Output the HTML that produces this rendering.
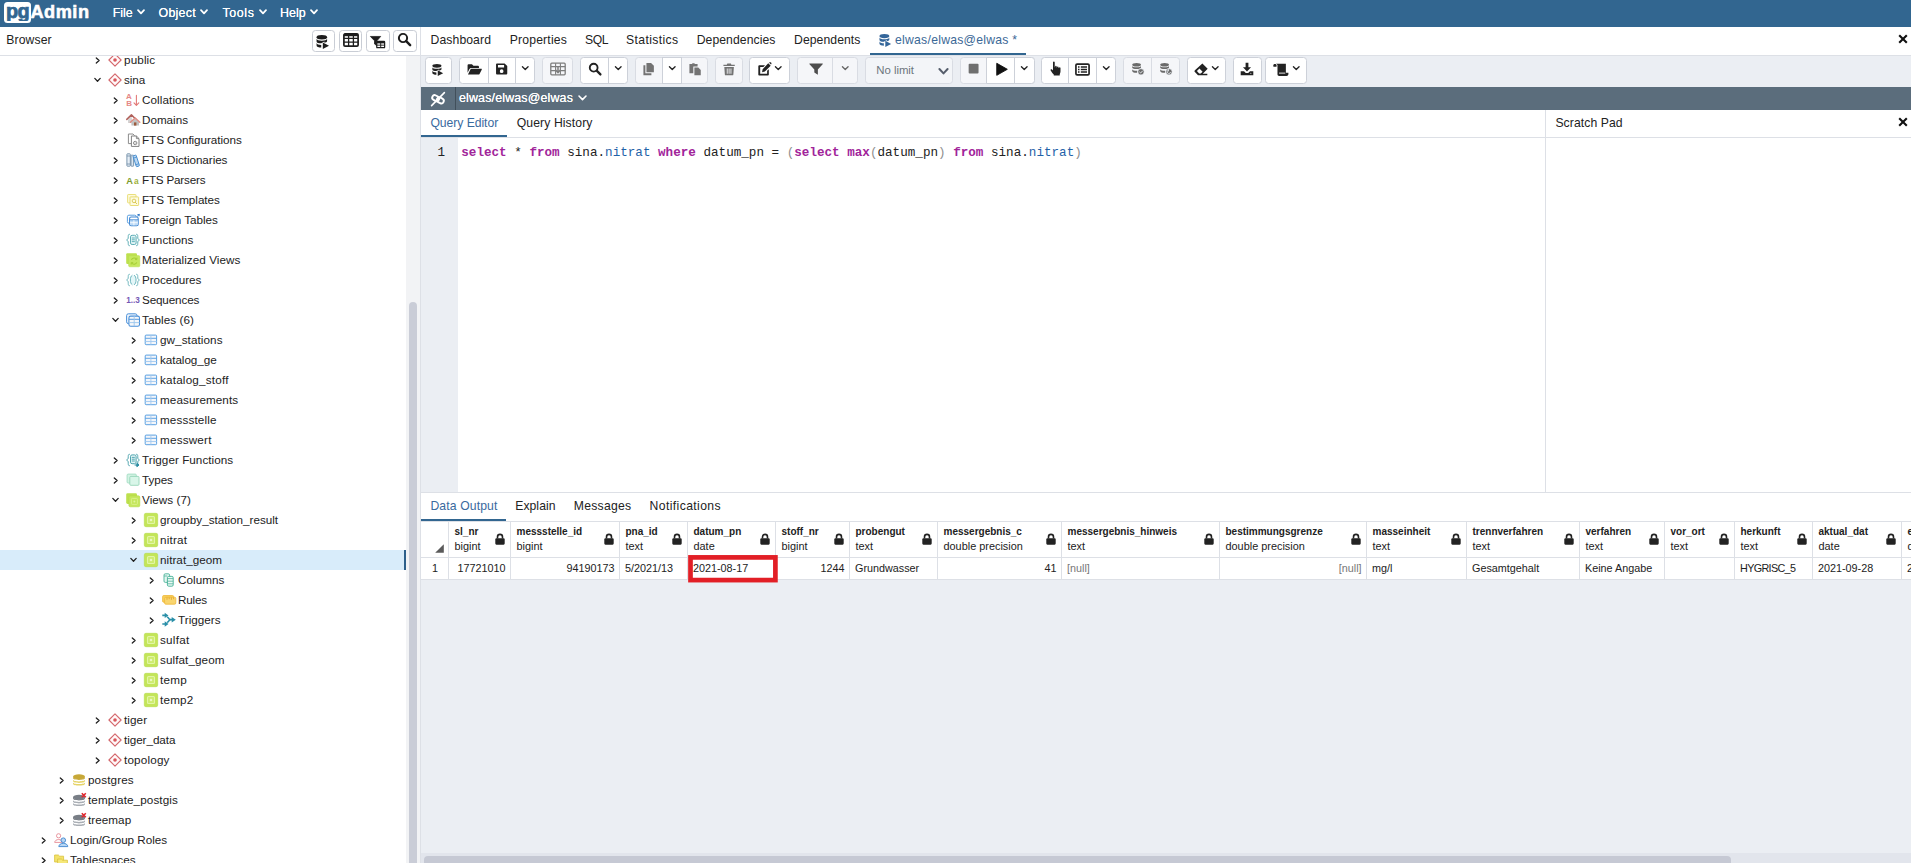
<!DOCTYPE html>
<html lang="en"><head><meta charset="utf-8"><title>pgAdmin 4</title>
<style>
html,body{margin:0;padding:0;}
body{width:1911px;height:863px;overflow:hidden;position:relative;background:#fff;font-family:'Liberation Sans', Arial, sans-serif;}
div,span.t,svg{position:absolute;box-sizing:border-box;}
span.t{white-space:pre;}
svg{overflow:visible;}
</style></head><body>
<div style="left:0px;top:0px;width:1911px;height:27px;background:#326690;"></div>
<div style="left:4px;top:2px;width:27px;height:21px;background:#fff;border-radius:3.5px;"></div>
<div style="left:4px;top:2px;width:27px;height:18.6px;overflow:hidden;">
<span class="t" id="t1" style="top:-1.150px;font-size:20.5px;line-height:20.5px;color:#326690;font-weight:700;left:2.20px;-webkit-text-stroke:0.75px #326690;transform:scaleX(0.97);transform-origin:0 0;letter-spacing:-0.6px;">pg</span>
</div>
<span class="t" id="t2" style="top:3.100px;font-size:18.2px;line-height:18.2px;color:#fff;font-weight:700;letter-spacing:0.521px;left:30.40px;-webkit-text-stroke:0.55px #fff;">Admin</span>
<span class="t" id="t3" style="top:7.000px;font-size:12.4px;line-height:12.4px;color:#fff;letter-spacing:-0.042px;left:112.70px;text-shadow:0 0 0.4px #fff;">File</span>
<svg style="left:137px;top:7.6px;" width="8" height="8" viewBox="0 0 8 8"><path d="M1 2.2 L4 5.3 L7 2.2" fill="none" stroke="#fff" stroke-width="1.8" stroke-linecap="round" stroke-linejoin="round"/></svg>
<span class="t" id="t4" style="top:7.000px;font-size:12.4px;line-height:12.4px;color:#fff;letter-spacing:0.281px;left:158.50px;text-shadow:0 0 0.4px #fff;">Object</span>
<svg style="left:200.4px;top:7.6px;" width="8" height="8" viewBox="0 0 8 8"><path d="M1 2.2 L4 5.3 L7 2.2" fill="none" stroke="#fff" stroke-width="1.8" stroke-linecap="round" stroke-linejoin="round"/></svg>
<span class="t" id="t5" style="top:7.000px;font-size:12.4px;line-height:12.4px;color:#fff;letter-spacing:0.632px;left:222.40px;text-shadow:0 0 0.4px #fff;">Tools</span>
<svg style="left:259px;top:7.6px;" width="8" height="8" viewBox="0 0 8 8"><path d="M1 2.2 L4 5.3 L7 2.2" fill="none" stroke="#fff" stroke-width="1.8" stroke-linecap="round" stroke-linejoin="round"/></svg>
<span class="t" id="t6" style="top:7.000px;font-size:12.4px;line-height:12.4px;color:#fff;letter-spacing:0.029px;left:280.00px;text-shadow:0 0 0.4px #fff;">Help</span>
<svg style="left:310.2px;top:7.6px;" width="8" height="8" viewBox="0 0 8 8"><path d="M1 2.2 L4 5.3 L7 2.2" fill="none" stroke="#fff" stroke-width="1.8" stroke-linecap="round" stroke-linejoin="round"/></svg>
<div style="left:0px;top:27px;width:420px;height:28px;background:#fff;"></div>
<div style="left:0px;top:55px;width:420px;height:1px;background:#dde0e6;"></div>
<span class="t" id="t7" style="top:34.100px;font-size:12.2px;line-height:12.2px;color:#222;letter-spacing:0.114px;left:6.30px;">Browser</span>
<div style="left:312px;top:30px;width:23px;height:22px;background:#fff;border:1px solid #c9cdd5;border-radius:3.5px;"></div>
<svg style="left:315.4px;top:34.2px;" width="15.6" height="15.6" viewBox="0 0 16 16"><ellipse cx="7" cy="3.4" rx="5.4" ry="2.3" fill="#1c1c1c"/><path d="M1.6 5 C1.6 7.6 12.4 7.6 12.4 5 V7.4 C12.4 8.2 11 8.8 9.6 9 L9.6 7.6 L6.4 9.6 C4 9.6 1.6 9 1.6 7.6 Z" fill="#1c1c1c"/><path d="M1.6 9 C1.6 10.6 4 11.2 6.4 11.3 V13.9 C4 13.8 1.6 13.2 1.6 11.8 Z" fill="#1c1c1c"/><path d="M8 8.6 L14.4 12 L8 15.4 Z" fill="#1c1c1c"/></svg>
<div style="left:339px;top:30px;width:23px;height:22px;background:#fff;border:1px solid #c9cdd5;border-radius:3.5px;"></div>
<svg style="left:342.8px;top:31.6px;" width="16" height="16" viewBox="0 0 16 16"><rect x="0.9" y="1.9" width="14.2" height="12.2" rx="1.2" fill="none" stroke="#1c1c1c" stroke-width="1.7"/><path d="M0.9 3 H15.1" stroke="#1c1c1c" stroke-width="2.4"/><path d="M0.9 6.4 H15.1 M0.9 10.2 H15.1 M5.6 1.9 V14.1 M10.4 1.9 V14.1" stroke="#1c1c1c" stroke-width="1.3"/></svg>
<div style="left:366px;top:30px;width:23.5px;height:22px;background:#fff;border:1px solid #c9cdd5;border-radius:3.5px;"></div>
<svg style="left:370.1px;top:34.1px;" width="15" height="15" viewBox="0 0 16 16"><path d="M0.4 2.6 H11.4 L7.4 7.2 V12.6 L4.8 10.6 V7.2 Z" fill="#1c1c1c" stroke="#1c1c1c" stroke-width="0.8" stroke-linejoin="round"/><rect x="7.2" y="7.8" width="8.4" height="6.8" rx="0.6" fill="#fff" stroke="#1c1c1c" stroke-width="1.3"/><path d="M7.2 9.2 H15.6" stroke="#1c1c1c" stroke-width="1.6"/><path d="M7.2 11.9 H15.6 M11.4 7.8 V14.6" stroke="#1c1c1c" stroke-width="1"/></svg>
<div style="left:393px;top:30px;width:23.5px;height:22px;background:#fff;border:1px solid #c9cdd5;border-radius:3.5px;"></div>
<svg style="left:397.1px;top:32.3px;" width="15" height="15" viewBox="0 0 16 16"><circle cx="6.4" cy="6.4" r="4.4" fill="none" stroke="#1c1c1c" stroke-width="2.1"/><path d="M9.8 9.8 L14 14" stroke="#1c1c1c" stroke-width="2.6" stroke-linecap="round"/></svg>
<div style="left:0;top:56px;width:406px;height:807px;overflow:hidden;">
<svg style="left:93.5px;top:-0.5px;" width="8" height="9" viewBox="0 0 8 9"><path d="M2.3 1.9 L5.1 4.5 L2.3 7.1" fill="none" stroke="#222" stroke-width="1.3" stroke-linecap="round" stroke-linejoin="round"/></svg>
<svg style="left:108px;top:-3px;" width="14" height="14" viewBox="0 0 14 14"><path d="M7 0.9 L13.1 7 L7 13.1 L0.9 7 Z" fill="#fff8f8" stroke="#d4676c" stroke-width="1.1" stroke-linejoin="round"/><circle cx="7" cy="7" r="1.8" fill="#d9575c"/></svg>
<span class="t" id="t8" style="top:-2.150px;font-size:11.7px;line-height:11.7px;color:#222;letter-spacing:0.126px;left:124.00px;">public</span>
<svg style="left:93.0px;top:20px;" width="9" height="8" viewBox="0 0 9 8"><path d="M1.8 2.4 L4.5 5.2 L7.2 2.4" fill="none" stroke="#222" stroke-width="1.3" stroke-linecap="round" stroke-linejoin="round"/></svg>
<svg style="left:108px;top:17px;" width="14" height="14" viewBox="0 0 14 14"><path d="M7 0.9 L13.1 7 L7 13.1 L0.9 7 Z" fill="#fff8f8" stroke="#d4676c" stroke-width="1.1" stroke-linejoin="round"/><circle cx="7" cy="7" r="1.8" fill="#d9575c"/></svg>
<span class="t" id="t9" style="top:17.850px;font-size:11.7px;line-height:11.7px;color:#222;letter-spacing:-0.063px;left:124.00px;">sina</span>
<svg style="left:111.5px;top:39.5px;" width="8" height="9" viewBox="0 0 8 9"><path d="M2.3 1.9 L5.1 4.5 L2.3 7.1" fill="none" stroke="#222" stroke-width="1.3" stroke-linecap="round" stroke-linejoin="round"/></svg>
<svg style="left:126px;top:37px;" width="14" height="14" viewBox="0 0 14 14"><text x="0.1" y="5.6" font-size="8" font-weight="700" fill="#e58886" font-family="Liberation Sans, sans-serif">A</text><text x="0.3" y="13.4" font-size="8" font-weight="700" fill="#e58886" font-family="Liberation Sans, sans-serif">B</text><path d="M10.4 2.4 V12 M8 9.8 L10.4 12.4 L12.8 9.8" fill="none" stroke="#e37a78" stroke-width="1.1" stroke-linecap="round" stroke-linejoin="round"/></svg>
<span class="t" id="t10" style="top:37.850px;font-size:11.7px;line-height:11.7px;color:#222;letter-spacing:0.087px;left:142.00px;">Collations</span>
<svg style="left:111.5px;top:59.5px;" width="8" height="9" viewBox="0 0 8 9"><path d="M2.3 1.9 L5.1 4.5 L2.3 7.1" fill="none" stroke="#222" stroke-width="1.3" stroke-linecap="round" stroke-linejoin="round"/></svg>
<svg style="left:126px;top:57px;" width="14" height="14" viewBox="0 0 14 14"><path d="M2 6.4 V10 H6 V6.4 L5.4 3 Z" fill="#d4d4d4"/><path d="M0.8 6.4 L5.4 1.9 L9.6 6" fill="none" stroke="#b0615b" stroke-width="1.5" stroke-linejoin="round" stroke-linecap="round"/><path d="M5.4 9 L9.2 5.6 L13 9 V12.6 H5.4 Z" fill="#c2c2c2"/><path d="M4.4 9.2 L9.2 4.9 L13.8 9.2" fill="none" stroke="#e08c82" stroke-width="1.4" stroke-linejoin="round" stroke-linecap="round"/><rect x="8" y="9.4" width="2.4" height="3.2" fill="#9c5a3c"/></svg>
<span class="t" id="t11" style="top:57.850px;font-size:11.7px;line-height:11.7px;color:#222;letter-spacing:-0.018px;left:142.00px;">Domains</span>
<svg style="left:111.5px;top:79.5px;" width="8" height="9" viewBox="0 0 8 9"><path d="M2.3 1.9 L5.1 4.5 L2.3 7.1" fill="none" stroke="#222" stroke-width="1.3" stroke-linecap="round" stroke-linejoin="round"/></svg>
<svg style="left:126px;top:77px;" width="14" height="14" viewBox="0 0 14 14"><path d="M2.4 1 H7 L8.6 2.6 V10.6 H2.4 Z" fill="#fff" stroke="#8c8c8c" stroke-width="1" stroke-linejoin="round"/><path d="M5.4 3 H10.4 L13 5.6 V13.4 H5.4 Z" fill="#fff" stroke="#808080" stroke-width="1" stroke-linejoin="round"/><path d="M10.4 3 V5.6 H13" fill="none" stroke="#808080" stroke-width="0.9"/><circle cx="9.2" cy="10" r="1.7" fill="none" stroke="#8a8a8a" stroke-width="1"/><circle cx="9.2" cy="10" r="0.55" fill="#8a8a8a"/></svg>
<span class="t" id="t12" style="top:77.850px;font-size:11.7px;line-height:11.7px;color:#222;letter-spacing:-0.055px;left:142.00px;">FTS Configurations</span>
<svg style="left:111.5px;top:99.5px;" width="8" height="9" viewBox="0 0 8 9"><path d="M2.3 1.9 L5.1 4.5 L2.3 7.1" fill="none" stroke="#222" stroke-width="1.3" stroke-linecap="round" stroke-linejoin="round"/></svg>
<svg style="left:126px;top:97px;" width="14" height="14" viewBox="0 0 14 14"><rect x="0.9" y="0.8" width="3.4" height="12.4" rx="0.6" fill="#e6eef6" stroke="#6f8ca6" stroke-width="0.9"/><path d="M0.9 3 H4.3 M0.9 11 H4.3" stroke="#6f8ca6" stroke-width="0.8"/><rect x="5" y="2.2" width="2.6" height="11" rx="0.5" fill="#dce7f2" stroke="#6f8ca6" stroke-width="0.9"/><g transform="rotate(-18 10.2 8)"><rect x="8.6" y="2.2" width="3.3" height="11.4" rx="0.6" fill="#b9d7f2" stroke="#4b8fd0" stroke-width="0.9"/><path d="M8.6 4.4 H11.9 M8.6 11.4 H11.9" stroke="#4b8fd0" stroke-width="0.8"/></g></svg>
<span class="t" id="t13" style="top:97.850px;font-size:11.7px;line-height:11.7px;color:#222;letter-spacing:-0.062px;left:142.00px;">FTS Dictionaries</span>
<svg style="left:111.5px;top:119.5px;" width="8" height="9" viewBox="0 0 8 9"><path d="M2.3 1.9 L5.1 4.5 L2.3 7.1" fill="none" stroke="#222" stroke-width="1.3" stroke-linecap="round" stroke-linejoin="round"/></svg>
<svg style="left:126px;top:117px;" width="14" height="14" viewBox="0 0 14 14"><text x="0.2" y="10.8" font-size="9.2" font-weight="700" fill="#7c9a2c" font-family="Liberation Sans, sans-serif">A</text><text x="8" y="10.8" font-size="8.4" font-weight="700" fill="#9db23a" font-family="Liberation Sans, sans-serif">a</text></svg>
<span class="t" id="t14" style="top:117.850px;font-size:11.7px;line-height:11.7px;color:#222;letter-spacing:-0.209px;left:142.00px;">FTS Parsers</span>
<svg style="left:111.5px;top:139.5px;" width="8" height="9" viewBox="0 0 8 9"><path d="M2.3 1.9 L5.1 4.5 L2.3 7.1" fill="none" stroke="#222" stroke-width="1.3" stroke-linecap="round" stroke-linejoin="round"/></svg>
<svg style="left:126px;top:137px;" width="14" height="14" viewBox="0 0 14 14"><rect x="1.6" y="1.5" width="8.4" height="8.4" rx="0.6" fill="#fdfadb" stroke="#e8db70" stroke-width="0.9"/><rect x="4" y="3.9" width="8.6" height="8.6" rx="0.6" fill="#fdfbe0" stroke="#e5d766" stroke-width="0.9"/><circle cx="8" cy="7.9" r="1.8" fill="none" stroke="#d9c650" stroke-width="0.9"/><path d="M9.3 9.3 L10.7 10.7" stroke="#d9c650" stroke-width="1" stroke-linecap="round"/></svg>
<span class="t" id="t15" style="top:137.850px;font-size:11.7px;line-height:11.7px;color:#222;letter-spacing:-0.045px;left:142.00px;">FTS Templates</span>
<svg style="left:111.5px;top:159.5px;" width="8" height="9" viewBox="0 0 8 9"><path d="M2.3 1.9 L5.1 4.5 L2.3 7.1" fill="none" stroke="#222" stroke-width="1.3" stroke-linecap="round" stroke-linejoin="round"/></svg>
<svg style="left:126px;top:157px;" width="14" height="14" viewBox="0 0 14 14"><rect x="1.4" y="2.2" width="8.8" height="8" rx="1.5" fill="#fff" stroke="#5a9fe0" stroke-width="1"/><rect x="3.6" y="4" width="8.6" height="8.8" rx="1.5" fill="#fff" stroke="#3f86d2" stroke-width="1.05"/><path d="M4.1 7.1 H11.7 V11.3 C11.7 11.9 11.3 12.3 10.7 12.3 H5.1 C4.5 12.3 4.1 11.9 4.1 11.3 Z" fill="#bcdaf6"/><path d="M3.6 6.8 H12.2" stroke="#3f86d2" stroke-width="0.9"/><path d="M4.1 9.7 H11.7 M7.9 7.1 V12.3" stroke="#fff" stroke-width="0.8"/><path d="M11.6 3 L13 1.7 M13.1 1.6 V2.9 M13.1 1.6 H11.8" stroke="#2f78c8" stroke-width="1" fill="none" stroke-linecap="round"/></svg>
<span class="t" id="t16" style="top:157.850px;font-size:11.7px;line-height:11.7px;color:#222;letter-spacing:-0.047px;left:142.00px;">Foreign Tables</span>
<svg style="left:111.5px;top:179.5px;" width="8" height="9" viewBox="0 0 8 9"><path d="M2.3 1.9 L5.1 4.5 L2.3 7.1" fill="none" stroke="#222" stroke-width="1.3" stroke-linecap="round" stroke-linejoin="round"/></svg>
<svg style="left:126px;top:177px;" width="14" height="14" viewBox="0 0 14 14"><path d="M3.4 1.2 C1.9 1.2 2.3 3.2 2.2 5 C2.1 6.4 1 6.6 0.6 7 C1 7.4 2.1 7.6 2.2 9 C2.3 10.8 1.9 12.8 3.4 12.8" fill="none" stroke="#56aab2" stroke-width="0.95" stroke-linecap="round"/><path d="M10.6 1.2 C12.1 1.2 11.7 3.2 11.8 5 C11.9 6.4 13 6.6 13.4 7 C13 7.4 11.9 7.6 11.8 9 C11.7 10.8 12.1 12.8 10.6 12.8" fill="none" stroke="#56aab2" stroke-width="0.95" stroke-linecap="round"/><rect x="4.5" y="2.3" width="5.6" height="9.2" rx="1.6" fill="#e1f4f6" stroke="#56aab2" stroke-width="0.95"/><path d="M5.8 5 H8.8 M5.8 6.8 H8.8 M5.8 8.6 H8.8" stroke="#56aab2" stroke-width="0.9"/></svg>
<span class="t" id="t17" style="top:177.850px;font-size:11.7px;line-height:11.7px;color:#222;letter-spacing:0.092px;left:142.00px;">Functions</span>
<svg style="left:111.5px;top:199.5px;" width="8" height="9" viewBox="0 0 8 9"><path d="M2.3 1.9 L5.1 4.5 L2.3 7.1" fill="none" stroke="#222" stroke-width="1.3" stroke-linecap="round" stroke-linejoin="round"/></svg>
<svg style="left:126px;top:197px;" width="14" height="14" viewBox="0 0 14 14"><rect x="0.2" y="0.2" width="10.8" height="10.8" rx="1.2" fill="#bde04e"/><rect x="2.6" y="2.6" width="11.2" height="11.2" rx="1.2" fill="#c6e85f" stroke="#b7dc4a" stroke-width="0.5"/><path d="M10.6 6.2 A3 3 0 0 0 5.4 6.8 M5.6 10 A3 3 0 0 0 10.8 9.4" fill="none" stroke="#a5cd36" stroke-width="1.1"/><path d="M10.9 4.6 V6.6 H9 M5.2 11.6 V9.6 H7.2" fill="none" stroke="#a5cd36" stroke-width="0.9"/></svg>
<span class="t" id="t18" style="top:197.850px;font-size:11.7px;line-height:11.7px;color:#222;letter-spacing:0.070px;left:142.00px;">Materialized Views</span>
<svg style="left:111.5px;top:219.5px;" width="8" height="9" viewBox="0 0 8 9"><path d="M2.3 1.9 L5.1 4.5 L2.3 7.1" fill="none" stroke="#222" stroke-width="1.3" stroke-linecap="round" stroke-linejoin="round"/></svg>
<svg style="left:126px;top:217px;" width="14" height="14" viewBox="0 0 14 14"><path d="M3.4 1.2 C1.9 1.2 2.3 3.2 2.2 5 C2.1 6.4 1 6.6 0.6 7 C1 7.4 2.1 7.6 2.2 9 C2.3 10.8 1.9 12.8 3.4 12.8" fill="none" stroke="#6ab4bc" stroke-width="0.95" stroke-linecap="round"/><path d="M10.6 1.2 C12.1 1.2 11.7 3.2 11.8 5 C11.9 6.4 13 6.6 13.4 7 C13 7.4 11.9 7.6 11.8 9 C11.7 10.8 12.1 12.8 10.6 12.8" fill="none" stroke="#6ab4bc" stroke-width="0.95" stroke-linecap="round"/><path d="M6 2.3 C3.7 3.6 3.7 10.4 6 11.7 H8.4 C10.7 10.4 10.7 3.6 8.4 2.3 Z" fill="#e4f6f8"/><path d="M6 2.3 C3.7 3.6 3.7 10.4 6 11.7 M8.4 2.3 C10.7 3.6 10.7 10.4 8.4 11.7" fill="none" stroke="#6ab4bc" stroke-width="0.95" stroke-linecap="round"/></svg>
<span class="t" id="t19" style="top:217.850px;font-size:11.7px;line-height:11.7px;color:#222;letter-spacing:-0.048px;left:142.00px;">Procedures</span>
<svg style="left:111.5px;top:239.5px;" width="8" height="9" viewBox="0 0 8 9"><path d="M2.3 1.9 L5.1 4.5 L2.3 7.1" fill="none" stroke="#222" stroke-width="1.3" stroke-linecap="round" stroke-linejoin="round"/></svg>
<svg style="left:126px;top:237px;" width="14" height="14" viewBox="0 0 14 14"><text x="0.2" y="10.3" font-size="9.4" font-weight="700" fill="#7558b5" font-family="Liberation Sans, sans-serif" textLength="13.6" lengthAdjust="spacingAndGlyphs">1..3</text></svg>
<span class="t" id="t20" style="top:237.850px;font-size:11.7px;line-height:11.7px;color:#222;letter-spacing:-0.143px;left:142.00px;">Sequences</span>
<svg style="left:111.0px;top:260px;" width="9" height="8" viewBox="0 0 9 8"><path d="M1.8 2.4 L4.5 5.2 L7.2 2.4" fill="none" stroke="#222" stroke-width="1.3" stroke-linecap="round" stroke-linejoin="round"/></svg>
<svg style="left:126px;top:257px;" width="14" height="14" viewBox="0 0 14 14"><rect x="0.6" y="0.8" width="10.4" height="9.8" rx="1.8" fill="#f0f6fc" stroke="#4a90d9" stroke-width="1"/><rect x="2.9" y="3.1" width="10.6" height="10.1" rx="1.8" fill="#f5f7fa" stroke="#4a90d9" stroke-width="1.05"/><path d="M2.9 6.3 H13.5" stroke="#4a90d9" stroke-width="0.9"/><path d="M2.9 9.6 H13.5 M8.2 3.1 V13.2" stroke="#9cc6ee" stroke-width="0.9"/></svg>
<span class="t" id="t21" style="top:257.850px;font-size:11.7px;line-height:11.7px;color:#222;letter-spacing:0.067px;left:142.00px;">Tables (6)</span>
<svg style="left:129.5px;top:279.5px;" width="8" height="9" viewBox="0 0 8 9"><path d="M2.3 1.9 L5.1 4.5 L2.3 7.1" fill="none" stroke="#222" stroke-width="1.3" stroke-linecap="round" stroke-linejoin="round"/></svg>
<svg style="left:144px;top:277px;" width="14" height="14" viewBox="0 0 14 14"><rect x="1.2" y="2.1" width="11.4" height="9.6" rx="0.9" fill="#f3f6fa" stroke="#5aa0e2" stroke-width="1"/><path d="M1.2 5.3 H12.6" stroke="#5aa0e2" stroke-width="0.95"/><path d="M1.2 8.5 H12.6 M6.9 2.1 V11.7" stroke="#a3caef" stroke-width="0.9"/></svg>
<span class="t" id="t22" style="top:277.850px;font-size:11.7px;line-height:11.7px;color:#222;letter-spacing:0.079px;left:160.00px;">gw_stations</span>
<svg style="left:129.5px;top:299.5px;" width="8" height="9" viewBox="0 0 8 9"><path d="M2.3 1.9 L5.1 4.5 L2.3 7.1" fill="none" stroke="#222" stroke-width="1.3" stroke-linecap="round" stroke-linejoin="round"/></svg>
<svg style="left:144px;top:297px;" width="14" height="14" viewBox="0 0 14 14"><rect x="1.2" y="2.1" width="11.4" height="9.6" rx="0.9" fill="#f3f6fa" stroke="#5aa0e2" stroke-width="1"/><path d="M1.2 5.3 H12.6" stroke="#5aa0e2" stroke-width="0.95"/><path d="M1.2 8.5 H12.6 M6.9 2.1 V11.7" stroke="#a3caef" stroke-width="0.9"/></svg>
<span class="t" id="t23" style="top:297.850px;font-size:11.7px;line-height:11.7px;color:#222;letter-spacing:-0.060px;left:160.00px;">katalog_ge</span>
<svg style="left:129.5px;top:319.5px;" width="8" height="9" viewBox="0 0 8 9"><path d="M2.3 1.9 L5.1 4.5 L2.3 7.1" fill="none" stroke="#222" stroke-width="1.3" stroke-linecap="round" stroke-linejoin="round"/></svg>
<svg style="left:144px;top:317px;" width="14" height="14" viewBox="0 0 14 14"><rect x="1.2" y="2.1" width="11.4" height="9.6" rx="0.9" fill="#f3f6fa" stroke="#5aa0e2" stroke-width="1"/><path d="M1.2 5.3 H12.6" stroke="#5aa0e2" stroke-width="0.95"/><path d="M1.2 8.5 H12.6 M6.9 2.1 V11.7" stroke="#a3caef" stroke-width="0.9"/></svg>
<span class="t" id="t24" style="top:317.850px;font-size:11.7px;line-height:11.7px;color:#222;letter-spacing:0.195px;left:160.00px;">katalog_stoff</span>
<svg style="left:129.5px;top:339.5px;" width="8" height="9" viewBox="0 0 8 9"><path d="M2.3 1.9 L5.1 4.5 L2.3 7.1" fill="none" stroke="#222" stroke-width="1.3" stroke-linecap="round" stroke-linejoin="round"/></svg>
<svg style="left:144px;top:337px;" width="14" height="14" viewBox="0 0 14 14"><rect x="1.2" y="2.1" width="11.4" height="9.6" rx="0.9" fill="#f3f6fa" stroke="#5aa0e2" stroke-width="1"/><path d="M1.2 5.3 H12.6" stroke="#5aa0e2" stroke-width="0.95"/><path d="M1.2 8.5 H12.6 M6.9 2.1 V11.7" stroke="#a3caef" stroke-width="0.9"/></svg>
<span class="t" id="t25" style="top:337.850px;font-size:11.7px;line-height:11.7px;color:#222;letter-spacing:0.074px;left:160.00px;">measurements</span>
<svg style="left:129.5px;top:359.5px;" width="8" height="9" viewBox="0 0 8 9"><path d="M2.3 1.9 L5.1 4.5 L2.3 7.1" fill="none" stroke="#222" stroke-width="1.3" stroke-linecap="round" stroke-linejoin="round"/></svg>
<svg style="left:144px;top:357px;" width="14" height="14" viewBox="0 0 14 14"><rect x="1.2" y="2.1" width="11.4" height="9.6" rx="0.9" fill="#f3f6fa" stroke="#5aa0e2" stroke-width="1"/><path d="M1.2 5.3 H12.6" stroke="#5aa0e2" stroke-width="0.95"/><path d="M1.2 8.5 H12.6 M6.9 2.1 V11.7" stroke="#a3caef" stroke-width="0.9"/></svg>
<span class="t" id="t26" style="top:357.850px;font-size:11.7px;line-height:11.7px;color:#222;letter-spacing:0.138px;left:160.00px;">messstelle</span>
<svg style="left:129.5px;top:379.5px;" width="8" height="9" viewBox="0 0 8 9"><path d="M2.3 1.9 L5.1 4.5 L2.3 7.1" fill="none" stroke="#222" stroke-width="1.3" stroke-linecap="round" stroke-linejoin="round"/></svg>
<svg style="left:144px;top:377px;" width="14" height="14" viewBox="0 0 14 14"><rect x="1.2" y="2.1" width="11.4" height="9.6" rx="0.9" fill="#f3f6fa" stroke="#5aa0e2" stroke-width="1"/><path d="M1.2 5.3 H12.6" stroke="#5aa0e2" stroke-width="0.95"/><path d="M1.2 8.5 H12.6 M6.9 2.1 V11.7" stroke="#a3caef" stroke-width="0.9"/></svg>
<span class="t" id="t27" style="top:377.850px;font-size:11.7px;line-height:11.7px;color:#222;letter-spacing:0.198px;left:160.00px;">messwert</span>
<svg style="left:111.5px;top:399.5px;" width="8" height="9" viewBox="0 0 8 9"><path d="M2.3 1.9 L5.1 4.5 L2.3 7.1" fill="none" stroke="#222" stroke-width="1.3" stroke-linecap="round" stroke-linejoin="round"/></svg>
<svg style="left:126px;top:397px;" width="14" height="14" viewBox="0 0 14 14"><path d="M3.4 1.2 C1.9 1.2 2.3 3.2 2.2 5 C2.1 6.4 1 6.6 0.6 7 C1 7.4 2.1 7.6 2.2 9 C2.3 10.8 1.9 12.8 3.4 12.8" fill="none" stroke="#48a0ab" stroke-width="0.95" stroke-linecap="round"/><path d="M10.6 1.2 C12.1 1.2 11.7 3.2 11.8 5 C11.9 6.4 13 6.6 13.4 7 C13 7.4 11.9 7.6 11.8 9 C11.7 10.8 12.1 12.8 10.6 12.8" fill="none" stroke="#48a0ab" stroke-width="0.95" stroke-linecap="round"/><rect x="4.5" y="1.9" width="5.6" height="8.8" rx="1.6" fill="#e1f4f6" stroke="#48a0ab" stroke-width="0.95"/><path d="M5.8 4.4 H8.8 M5.8 6.2 H8.8 M5.8 8 H8.8" stroke="#48a0ab" stroke-width="0.9"/><path d="M8.6 12 H12 M10.9 10.3 L13 12 L10.9 13.7 Z" fill="#2b8ca3" stroke="#2b8ca3" stroke-width="1" stroke-linejoin="round"/></svg>
<span class="t" id="t28" style="top:397.850px;font-size:11.7px;line-height:11.7px;color:#222;letter-spacing:0.040px;left:142.00px;">Trigger Functions</span>
<svg style="left:111.5px;top:419.5px;" width="8" height="9" viewBox="0 0 8 9"><path d="M2.3 1.9 L5.1 4.5 L2.3 7.1" fill="none" stroke="#222" stroke-width="1.3" stroke-linecap="round" stroke-linejoin="round"/></svg>
<svg style="left:126px;top:417px;" width="14" height="14" viewBox="0 0 14 14"><rect x="1.1" y="1.1" width="9.2" height="8.9" rx="1" fill="#d3f3e4" stroke="#a3dcc3" stroke-width="0.9"/><rect x="3.8" y="3.4" width="9.2" height="8.9" rx="1" fill="#d9f6e9" stroke="#96d6b9" stroke-width="0.9"/></svg>
<span class="t" id="t29" style="top:417.850px;font-size:11.7px;line-height:11.7px;color:#222;letter-spacing:-0.057px;left:142.00px;">Types</span>
<svg style="left:111.0px;top:440px;" width="9" height="8" viewBox="0 0 9 8"><path d="M1.8 2.4 L4.5 5.2 L7.2 2.4" fill="none" stroke="#222" stroke-width="1.3" stroke-linecap="round" stroke-linejoin="round"/></svg>
<svg style="left:126px;top:437px;" width="14" height="14" viewBox="0 0 14 14"><rect x="0.2" y="0.3" width="10.8" height="10.6" rx="1.4" fill="#bde04e"/><rect x="2.9" y="2.8" width="10.9" height="11" rx="1.4" fill="#c5e75c" stroke="#b3d945" stroke-width="0.6"/><rect x="5.4" y="5.4" width="6" height="6" rx="0.9" fill="none" stroke="#daf190" stroke-width="0.9"/><circle cx="8.4" cy="8.4" r="1" fill="#e0f4a0"/></svg>
<span class="t" id="t30" style="top:437.850px;font-size:11.7px;line-height:11.7px;color:#222;letter-spacing:0.056px;left:142.00px;">Views (7)</span>
<svg style="left:129.5px;top:459.5px;" width="8" height="9" viewBox="0 0 8 9"><path d="M2.3 1.9 L5.1 4.5 L2.3 7.1" fill="none" stroke="#222" stroke-width="1.3" stroke-linecap="round" stroke-linejoin="round"/></svg>
<svg style="left:144px;top:457px;" width="14" height="14" viewBox="0 0 14 14"><rect x="0.3" y="0.3" width="13.4" height="13.4" rx="1.6" fill="#c3e558" stroke="#b4da48" stroke-width="0.6"/><rect x="3.5" y="3.5" width="7" height="7" rx="1" fill="#cdeb70" stroke="#e2f5a6" stroke-width="1.1"/><circle cx="7" cy="7" r="1.3" fill="#ecf9c0"/></svg>
<span class="t" id="t31" style="top:457.850px;font-size:11.7px;line-height:11.7px;color:#222;letter-spacing:-0.008px;left:160.00px;">groupby_station_result</span>
<svg style="left:129.5px;top:479.5px;" width="8" height="9" viewBox="0 0 8 9"><path d="M2.3 1.9 L5.1 4.5 L2.3 7.1" fill="none" stroke="#222" stroke-width="1.3" stroke-linecap="round" stroke-linejoin="round"/></svg>
<svg style="left:144px;top:477px;" width="14" height="14" viewBox="0 0 14 14"><rect x="0.3" y="0.3" width="13.4" height="13.4" rx="1.6" fill="#c3e558" stroke="#b4da48" stroke-width="0.6"/><rect x="3.5" y="3.5" width="7" height="7" rx="1" fill="#cdeb70" stroke="#e2f5a6" stroke-width="1.1"/><circle cx="7" cy="7" r="1.3" fill="#ecf9c0"/></svg>
<span class="t" id="t32" style="top:477.850px;font-size:11.7px;line-height:11.7px;color:#222;letter-spacing:0.203px;left:160.00px;">nitrat</span>
<div style="left:0px;top:494px;width:406px;height:20px;background:#d8ecfa;border-right:2px solid #2c5f8a;"></div>
<svg style="left:129.0px;top:500px;" width="9" height="8" viewBox="0 0 9 8"><path d="M1.8 2.4 L4.5 5.2 L7.2 2.4" fill="none" stroke="#222" stroke-width="1.3" stroke-linecap="round" stroke-linejoin="round"/></svg>
<svg style="left:144px;top:497px;" width="14" height="14" viewBox="0 0 14 14"><rect x="0.3" y="0.3" width="13.4" height="13.4" rx="1.6" fill="#c3e558" stroke="#b4da48" stroke-width="0.6"/><rect x="3.5" y="3.5" width="7" height="7" rx="1" fill="#cdeb70" stroke="#e2f5a6" stroke-width="1.1"/><circle cx="7" cy="7" r="1.3" fill="#ecf9c0"/></svg>
<span class="t" id="t33" style="top:497.850px;font-size:11.7px;line-height:11.7px;color:#222;letter-spacing:0.033px;left:160.00px;">nitrat_geom</span>
<svg style="left:147.5px;top:519.5px;" width="8" height="9" viewBox="0 0 8 9"><path d="M2.3 1.9 L5.1 4.5 L2.3 7.1" fill="none" stroke="#222" stroke-width="1.3" stroke-linecap="round" stroke-linejoin="round"/></svg>
<svg style="left:162px;top:517px;" width="14" height="14" viewBox="0 0 14 14"><rect x="2" y="0.8" width="5.6" height="8.6" rx="1.3" fill="#e3f6f0" stroke="#4bb39a" stroke-width="0.9"/><rect x="5.4" y="3.4" width="5.8" height="9.8" rx="1.3" fill="#eefaf6" stroke="#4bb39a" stroke-width="0.95"/><path d="M5.4 5.6 H11.2 M5.4 8.2 H11.2 M5.4 10.8 H11.2" stroke="#4bb39a" stroke-width="0.8"/><path d="M2 3 H5.2" stroke="#4bb39a" stroke-width="0.8"/></svg>
<span class="t" id="t34" style="top:517.850px;font-size:11.7px;line-height:11.7px;color:#222;letter-spacing:0.039px;left:178.00px;">Columns</span>
<svg style="left:147.5px;top:539.5px;" width="8" height="9" viewBox="0 0 8 9"><path d="M2.3 1.9 L5.1 4.5 L2.3 7.1" fill="none" stroke="#222" stroke-width="1.3" stroke-linecap="round" stroke-linejoin="round"/></svg>
<svg style="left:162px;top:537px;" width="14" height="14" viewBox="0 0 14 14"><rect x="0.6" y="2.5" width="11" height="6.8" rx="1.2" fill="#f8cf5a" stroke="#efb73a" stroke-width="0.8"/><rect x="2.6" y="4.2" width="11.2" height="7" rx="1.2" fill="#f9d56e" stroke="#efb73a" stroke-width="0.8"/><path d="M5 4.4 V6.8 M7.2 4.4 V6.2 M9.4 4.4 V6.8 M11.6 4.4 V6.2" stroke="#e0a326" stroke-width="0.8"/></svg>
<span class="t" id="t35" style="top:537.850px;font-size:11.7px;line-height:11.7px;color:#222;letter-spacing:-0.218px;left:178.00px;">Rules</span>
<svg style="left:147.5px;top:559.5px;" width="8" height="9" viewBox="0 0 8 9"><path d="M2.3 1.9 L5.1 4.5 L2.3 7.1" fill="none" stroke="#222" stroke-width="1.3" stroke-linecap="round" stroke-linejoin="round"/></svg>
<svg style="left:162px;top:557px;" width="14" height="14" viewBox="0 0 14 14"><path d="M0.3 2.4 H3.6 M0.3 11 H3.6 M7.6 6.7 H10.6" stroke="#2a8fa8" stroke-width="1.7" fill="none"/><path d="M2.7 -0.3 L6.5 2.4 L2.7 5.1 Z M2.7 8.3 L6.5 11 L2.7 13.7 Z M9.7 3.9 L13.8 6.7 L9.7 9.5 Z" fill="#2a8fa8"/><path d="M5.4 4.2 C6.6 4.8 6.8 5.8 8 6.7 C6.8 7.6 6.6 8.6 5.4 9.2" stroke="#2a8fa8" stroke-width="1.5" fill="none" stroke-linecap="round"/></svg>
<span class="t" id="t36" style="top:557.850px;font-size:11.7px;line-height:11.7px;color:#222;letter-spacing:0.020px;left:178.00px;">Triggers</span>
<svg style="left:129.5px;top:579.5px;" width="8" height="9" viewBox="0 0 8 9"><path d="M2.3 1.9 L5.1 4.5 L2.3 7.1" fill="none" stroke="#222" stroke-width="1.3" stroke-linecap="round" stroke-linejoin="round"/></svg>
<svg style="left:144px;top:577px;" width="14" height="14" viewBox="0 0 14 14"><rect x="0.3" y="0.3" width="13.4" height="13.4" rx="1.6" fill="#c3e558" stroke="#b4da48" stroke-width="0.6"/><rect x="3.5" y="3.5" width="7" height="7" rx="1" fill="#cdeb70" stroke="#e2f5a6" stroke-width="1.1"/><circle cx="7" cy="7" r="1.3" fill="#ecf9c0"/></svg>
<span class="t" id="t37" style="top:577.850px;font-size:11.7px;line-height:11.7px;color:#222;letter-spacing:0.244px;left:160.00px;">sulfat</span>
<svg style="left:129.5px;top:599.5px;" width="8" height="9" viewBox="0 0 8 9"><path d="M2.3 1.9 L5.1 4.5 L2.3 7.1" fill="none" stroke="#222" stroke-width="1.3" stroke-linecap="round" stroke-linejoin="round"/></svg>
<svg style="left:144px;top:597px;" width="14" height="14" viewBox="0 0 14 14"><rect x="0.3" y="0.3" width="13.4" height="13.4" rx="1.6" fill="#c3e558" stroke="#b4da48" stroke-width="0.6"/><rect x="3.5" y="3.5" width="7" height="7" rx="1" fill="#cdeb70" stroke="#e2f5a6" stroke-width="1.1"/><circle cx="7" cy="7" r="1.3" fill="#ecf9c0"/></svg>
<span class="t" id="t38" style="top:597.850px;font-size:11.7px;line-height:11.7px;color:#222;letter-spacing:0.084px;left:160.00px;">sulfat_geom</span>
<svg style="left:129.5px;top:619.5px;" width="8" height="9" viewBox="0 0 8 9"><path d="M2.3 1.9 L5.1 4.5 L2.3 7.1" fill="none" stroke="#222" stroke-width="1.3" stroke-linecap="round" stroke-linejoin="round"/></svg>
<svg style="left:144px;top:617px;" width="14" height="14" viewBox="0 0 14 14"><rect x="0.3" y="0.3" width="13.4" height="13.4" rx="1.6" fill="#c3e558" stroke="#b4da48" stroke-width="0.6"/><rect x="3.5" y="3.5" width="7" height="7" rx="1" fill="#cdeb70" stroke="#e2f5a6" stroke-width="1.1"/><circle cx="7" cy="7" r="1.3" fill="#ecf9c0"/></svg>
<span class="t" id="t39" style="top:617.850px;font-size:11.7px;line-height:11.7px;color:#222;letter-spacing:0.229px;left:160.00px;">temp</span>
<svg style="left:129.5px;top:639.5px;" width="8" height="9" viewBox="0 0 8 9"><path d="M2.3 1.9 L5.1 4.5 L2.3 7.1" fill="none" stroke="#222" stroke-width="1.3" stroke-linecap="round" stroke-linejoin="round"/></svg>
<svg style="left:144px;top:637px;" width="14" height="14" viewBox="0 0 14 14"><rect x="0.3" y="0.3" width="13.4" height="13.4" rx="1.6" fill="#c3e558" stroke="#b4da48" stroke-width="0.6"/><rect x="3.5" y="3.5" width="7" height="7" rx="1" fill="#cdeb70" stroke="#e2f5a6" stroke-width="1.1"/><circle cx="7" cy="7" r="1.3" fill="#ecf9c0"/></svg>
<span class="t" id="t40" style="top:637.850px;font-size:11.7px;line-height:11.7px;color:#222;letter-spacing:0.203px;left:160.00px;">temp2</span>
<svg style="left:93.5px;top:659.5px;" width="8" height="9" viewBox="0 0 8 9"><path d="M2.3 1.9 L5.1 4.5 L2.3 7.1" fill="none" stroke="#222" stroke-width="1.3" stroke-linecap="round" stroke-linejoin="round"/></svg>
<svg style="left:108px;top:657px;" width="14" height="14" viewBox="0 0 14 14"><path d="M7 0.9 L13.1 7 L7 13.1 L0.9 7 Z" fill="#fff8f8" stroke="#d4676c" stroke-width="1.1" stroke-linejoin="round"/><circle cx="7" cy="7" r="1.8" fill="#d9575c"/></svg>
<span class="t" id="t41" style="top:657.850px;font-size:11.7px;line-height:11.7px;color:#222;letter-spacing:0.090px;left:124.00px;">tiger</span>
<svg style="left:93.5px;top:679.5px;" width="8" height="9" viewBox="0 0 8 9"><path d="M2.3 1.9 L5.1 4.5 L2.3 7.1" fill="none" stroke="#222" stroke-width="1.3" stroke-linecap="round" stroke-linejoin="round"/></svg>
<svg style="left:108px;top:677px;" width="14" height="14" viewBox="0 0 14 14"><path d="M7 0.9 L13.1 7 L7 13.1 L0.9 7 Z" fill="#fff8f8" stroke="#d4676c" stroke-width="1.1" stroke-linejoin="round"/><circle cx="7" cy="7" r="1.8" fill="#d9575c"/></svg>
<span class="t" id="t42" style="top:677.850px;font-size:11.7px;line-height:11.7px;color:#222;letter-spacing:-0.058px;left:124.00px;">tiger_data</span>
<svg style="left:93.5px;top:699.5px;" width="8" height="9" viewBox="0 0 8 9"><path d="M2.3 1.9 L5.1 4.5 L2.3 7.1" fill="none" stroke="#222" stroke-width="1.3" stroke-linecap="round" stroke-linejoin="round"/></svg>
<svg style="left:108px;top:697px;" width="14" height="14" viewBox="0 0 14 14"><path d="M7 0.9 L13.1 7 L7 13.1 L0.9 7 Z" fill="#fff8f8" stroke="#d4676c" stroke-width="1.1" stroke-linejoin="round"/><circle cx="7" cy="7" r="1.8" fill="#d9575c"/></svg>
<span class="t" id="t43" style="top:697.850px;font-size:11.7px;line-height:11.7px;color:#222;letter-spacing:0.175px;left:124.00px;">topology</span>
<svg style="left:57.5px;top:719.5px;" width="8" height="9" viewBox="0 0 8 9"><path d="M2.3 1.9 L5.1 4.5 L2.3 7.1" fill="none" stroke="#222" stroke-width="1.3" stroke-linecap="round" stroke-linejoin="round"/></svg>
<svg style="left:72px;top:717px;" width="14" height="14" viewBox="0 0 14 14"><g transform="translate(0 0)"><path d="M1 9.2 C1 11.7 13 11.7 13 9.2 V10.7 C13 13.2 1 13.2 1 10.7 Z" fill="#e6d468"/><path d="M1 6.5 C1 9.0 13 9.0 13 6.5 V8.0 C13 10.5 1 10.5 1 8.0 Z" fill="#e6d468"/><path d="M1 3.8 C1 6.3 13 6.3 13 3.8 V5.1 C13 7.6 1 7.6 1 5.1 Z" fill="#c7a838"/><ellipse cx="7" cy="3.8" rx="6" ry="2.5" fill="#c7a838"/></g></svg>
<span class="t" id="t44" style="top:717.850px;font-size:11.7px;line-height:11.7px;color:#222;letter-spacing:0.109px;left:88.00px;">postgres</span>
<svg style="left:57.5px;top:739.5px;" width="8" height="9" viewBox="0 0 8 9"><path d="M2.3 1.9 L5.1 4.5 L2.3 7.1" fill="none" stroke="#222" stroke-width="1.3" stroke-linecap="round" stroke-linejoin="round"/></svg>
<svg style="left:72px;top:737px;" width="14" height="14" viewBox="0 0 14 14"><g transform="translate(0 0.5)"><path d="M1 9.2 C1 11.7 13 11.7 13 9.2 V10.7 C13 13.2 1 13.2 1 10.7 Z" fill="#a9aeb4"/><path d="M1 6.5 C1 9.0 13 9.0 13 6.5 V8.0 C13 10.5 1 10.5 1 8.0 Z" fill="#a9aeb4"/><path d="M1 3.8 C1 6.3 13 6.3 13 3.8 V5.1 C13 7.6 1 7.6 1 5.1 Z" fill="#787e86"/><ellipse cx="7" cy="3.8" rx="6" ry="2.5" fill="#787e86"/></g><path d="M9.8 0.2 L13.8 4.2 M13.8 0.2 L9.8 4.2" stroke="#e0262c" stroke-width="1.6"/></svg>
<span class="t" id="t45" style="top:737.850px;font-size:11.7px;line-height:11.7px;color:#222;letter-spacing:0.096px;left:88.00px;">template_postgis</span>
<svg style="left:57.5px;top:759.5px;" width="8" height="9" viewBox="0 0 8 9"><path d="M2.3 1.9 L5.1 4.5 L2.3 7.1" fill="none" stroke="#222" stroke-width="1.3" stroke-linecap="round" stroke-linejoin="round"/></svg>
<svg style="left:72px;top:757px;" width="14" height="14" viewBox="0 0 14 14"><g transform="translate(0 0.5)"><path d="M1 9.2 C1 11.7 13 11.7 13 9.2 V10.7 C13 13.2 1 13.2 1 10.7 Z" fill="#a9aeb4"/><path d="M1 6.5 C1 9.0 13 9.0 13 6.5 V8.0 C13 10.5 1 10.5 1 8.0 Z" fill="#a9aeb4"/><path d="M1 3.8 C1 6.3 13 6.3 13 3.8 V5.1 C13 7.6 1 7.6 1 5.1 Z" fill="#787e86"/><ellipse cx="7" cy="3.8" rx="6" ry="2.5" fill="#787e86"/></g><path d="M9.8 0.2 L13.8 4.2 M13.8 0.2 L9.8 4.2" stroke="#e0262c" stroke-width="1.6"/></svg>
<span class="t" id="t46" style="top:757.850px;font-size:11.7px;line-height:11.7px;color:#222;letter-spacing:0.044px;left:88.00px;">treemap</span>
<svg style="left:39.5px;top:779.5px;" width="8" height="9" viewBox="0 0 8 9"><path d="M2.3 1.9 L5.1 4.5 L2.3 7.1" fill="none" stroke="#222" stroke-width="1.3" stroke-linecap="round" stroke-linejoin="round"/></svg>
<svg style="left:54px;top:777px;" width="14" height="14" viewBox="0 0 14 14"><circle cx="4.6" cy="2.8" r="2.1" fill="#fff" stroke="#e58a94" stroke-width="0.9"/><path d="M0.7 9.4 C0.9 5.6 8.3 5.6 8.5 9.4 Z" fill="#fff" stroke="#e58a94" stroke-width="0.9" stroke-linejoin="round"/><circle cx="9.3" cy="7.2" r="2.3" fill="#b8d6f3" stroke="#3f86cf" stroke-width="0.9"/><path d="M4.8 13.6 C5 9.2 13.6 9.2 13.8 13.6 Z" fill="#b8d6f3" stroke="#3f86cf" stroke-width="0.9" stroke-linejoin="round"/></svg>
<span class="t" id="t47" style="top:777.850px;font-size:11.7px;line-height:11.7px;color:#222;letter-spacing:-0.022px;left:70.00px;">Login/Group Roles</span>
<svg style="left:39.5px;top:799.5px;" width="8" height="9" viewBox="0 0 8 9"><path d="M2.3 1.9 L5.1 4.5 L2.3 7.1" fill="none" stroke="#222" stroke-width="1.3" stroke-linecap="round" stroke-linejoin="round"/></svg>
<svg style="left:54px;top:797px;" width="14" height="14" viewBox="0 0 14 14"><path d="M0.6 2 H4.4 L5.6 3.2 H9.6 V9 H0.6 Z" fill="#f3e26a" stroke="#d9c13c" stroke-width="0.8" stroke-linejoin="round"/><path d="M3.6 6 H7.4 L8.6 7.2 H13.4 V13.4 H3.6 Z" fill="#f6e878" stroke="#d9c13c" stroke-width="0.8" stroke-linejoin="round"/></svg>
<span class="t" id="t48" style="top:797.850px;font-size:11.7px;line-height:11.7px;color:#222;letter-spacing:0.065px;left:70.00px;">Tablespaces</span>
</div>
<div style="left:406px;top:56px;width:14px;height:807px;background:#f2f3f5;"></div>
<div style="left:409px;top:302px;width:8px;height:561px;background:#cacdd7;border-radius:4px 4px 0 0;"></div>
<div style="left:420px;top:27px;width:1px;height:836px;background:#dde0e6;"></div>
<div style="left:421px;top:27px;width:1490px;height:28px;background:#fff;"></div>
<div style="left:421px;top:55px;width:1490px;height:1px;background:#dde0e6;"></div>
<span class="t" id="t49" style="top:34.100px;font-size:12.2px;line-height:12.2px;color:#222;letter-spacing:0.086px;left:430.60px;">Dashboard</span>
<span class="t" id="t50" style="top:34.100px;font-size:12.2px;line-height:12.2px;color:#222;letter-spacing:0.175px;left:509.70px;">Properties</span>
<span class="t" id="t51" style="top:34.100px;font-size:12.2px;line-height:12.2px;color:#222;letter-spacing:-0.464px;left:585.00px;">SQL</span>
<span class="t" id="t52" style="top:34.100px;font-size:12.2px;line-height:12.2px;color:#222;letter-spacing:0.373px;left:626.00px;">Statistics</span>
<span class="t" id="t53" style="top:34.100px;font-size:12.2px;line-height:12.2px;color:#222;letter-spacing:0.073px;left:696.70px;">Dependencies</span>
<span class="t" id="t54" style="top:34.100px;font-size:12.2px;line-height:12.2px;color:#222;letter-spacing:0.077px;left:794.00px;">Dependents</span>
<svg style="left:877.6px;top:32.6px;" width="14.6" height="14.6" viewBox="0 0 16 16"><ellipse cx="7" cy="3.4" rx="5.4" ry="2.3" fill="#34669a"/><path d="M1.6 5 C1.6 7.6 12.4 7.6 12.4 5 V7.4 C12.4 8.2 11 8.8 9.6 9 L9.6 7.6 L6.4 9.6 C4 9.6 1.6 9 1.6 7.6 Z" fill="#34669a"/><path d="M1.6 9 C1.6 10.6 4 11.2 6.4 11.3 V13.9 C4 13.8 1.6 13.2 1.6 11.8 Z" fill="#34669a"/><path d="M8 8.6 L14.4 12 L8 15.4 Z" fill="#34669a"/></svg>
<span class="t" id="t55" style="top:34.100px;font-size:12.2px;line-height:12.2px;color:#3b6896;letter-spacing:0.264px;left:895.00px;">elwas/elwas@elwas *</span>
<div style="left:870px;top:53px;width:156px;height:2px;background:#326690;"></div>
<svg style="left:1897.7px;top:34.2px;" width="10" height="10" viewBox="0 0 10 10"><path d="M1.2 1.2 L8.8 8.8 M8.8 1.2 L1.2 8.8" stroke="#111" stroke-width="2.1" stroke-linecap="butt"/></svg>
<div style="left:421px;top:56px;width:1490px;height:31px;background:#ebeef3;"></div>
<div style="left:425px;top:57px;width:27px;height:27px;background:#fff;border:1px solid #cdd1d9;border-radius:3.5px;"></div>
<svg style="left:431.25px;top:63.25px;" width="13.5" height="13.5" viewBox="0 0 16 16"><ellipse cx="7" cy="3.4" rx="5.4" ry="2.3" fill="#222"/><path d="M1.6 5 C1.6 7.6 12.4 7.6 12.4 5 V7.4 C12.4 8.2 11 8.8 9.6 9 L9.6 7.6 L6.4 9.6 C4 9.6 1.6 9 1.6 7.6 Z" fill="#222"/><path d="M1.6 9 C1.6 10.6 4 11.2 6.4 11.3 V13.9 C4 13.8 1.6 13.2 1.6 11.8 Z" fill="#222"/><path d="M8 8.6 L14.4 12 L8 15.4 Z" fill="#222"/></svg>
<div style="left:459px;top:57px;width:76px;height:27px;background:#fff;border:1px solid #cdd1d9;border-radius:3.5px;"></div>
<div style="left:488px;top:57px;width:1px;height:27px;background:#cdd1d9;"></div>
<div style="left:515px;top:57px;width:1px;height:27px;background:#cdd1d9;"></div>
<svg style="left:466.7px;top:61.8px;" width="15.2" height="15.2" viewBox="0 0 16 16"><path d="M0.6 3.4 C0.6 2.8 1 2.4 1.6 2.4 H5.2 L6.8 4 H11.6 C12.2 4 12.6 4.4 12.6 5 V6.2 H4.4 C3.6 6.2 3 6.6 2.6 7.4 L0.6 11.4 Z" fill="#222"/><path d="M3.6 7.8 C3.8 7.4 4.2 7.2 4.6 7.2 H15 C15.6 7.2 15.8 7.7 15.5 8.2 L13.2 12.6 C13 13 12.6 13.3 12.1 13.3 H1 Z" fill="#222"/></svg>
<svg style="left:495.2px;top:62.0px;" width="14" height="14" viewBox="0 0 16 16"><path d="M2.2 1.6 H11 L14 4.6 V13.2 C14 13.8 13.6 14.2 13 14.2 H2.2 C1.6 14.2 1.2 13.8 1.2 13.2 V2.6 C1.2 2 1.6 1.6 2.2 1.6 Z M3.4 3.4 V6.4 H10.4 V3.4 Z M7.6 8.4 A2.1 2.1 0 1 0 7.6 12.6 A2.1 2.1 0 1 0 7.6 8.4 Z" fill="#222" fill-rule="evenodd"/></svg>
<svg style="left:519.15px;top:62.15px;" width="12.5" height="12.5" viewBox="0 0 16 16"><path d="M4.4 6 L8 9.6 L11.6 6" fill="none" stroke="#222" stroke-width="1.7" stroke-linecap="round" stroke-linejoin="round"/></svg>
<div style="left:542px;top:57px;width:31px;height:27px;background:#f5f6f9;border:1px solid #d9dce3;border-radius:3.5px;"></div>
<svg style="left:550.2px;top:61.4px;" width="16" height="16" viewBox="0 0 16 16"><rect x="0.8" y="2.2" width="14.4" height="11.6" rx="1" fill="none" stroke="#7d7d7d" stroke-width="1.3"/><path d="M0.8 5.6 H15.2 M0.8 9.6 H5 M11 9.6 H15.2 M5.6 2.2 V13.8 M10.4 2.2 V13.8" stroke="#7d7d7d" stroke-width="1.1"/><path d="M8 5 V11.4 M5.6 9 L8 11.6 L10.4 9" stroke="#7d7d7d" stroke-width="1.5" fill="none"/></svg>
<div style="left:580px;top:57px;width:48px;height:27px;background:#fff;border:1px solid #cdd1d9;border-radius:3.5px;"></div>
<div style="left:608px;top:57px;width:1px;height:27px;background:#cdd1d9;"></div>
<svg style="left:587.7px;top:61.9px;" width="14.2" height="14.2" viewBox="0 0 16 16"><circle cx="6.4" cy="6.4" r="4.4" fill="none" stroke="#222" stroke-width="2.1"/><path d="M9.8 9.8 L14 14" stroke="#222" stroke-width="2.6" stroke-linecap="round"/></svg>
<svg style="left:611.95px;top:62.15px;" width="12.5" height="12.5" viewBox="0 0 16 16"><path d="M4.4 6 L8 9.6 L11.6 6" fill="none" stroke="#222" stroke-width="1.7" stroke-linecap="round" stroke-linejoin="round"/></svg>
<div style="left:635px;top:57px;width:73px;height:27px;background:#f5f6f9;border:1px solid #d9dce3;border-radius:3.5px;"></div>
<div style="left:662px;top:57px;width:1px;height:27px;background:#d9dce3;"></div>
<div style="left:681px;top:57px;width:1px;height:27px;background:#d9dce3;"></div>
<div style="left:662px;top:57px;width:20px;height:27px;background:#fff;border:1px solid #cdd1d9;border-width:1px 1px 1px 1px;"></div>
<svg style="left:641.9px;top:61.9px;" width="14.2" height="14.2" viewBox="0 0 16 16"><path d="M5 1 H10.2 L13.4 4.2 V11.6 H5 Z" fill="#737373"/><path d="M3.8 3.6 V12.8 H10.6 V15 H1.6 V3.6 Z" fill="#737373"/></svg>
<svg style="left:665.55px;top:62.15px;" width="12.5" height="12.5" viewBox="0 0 16 16"><path d="M4.4 6 L8 9.6 L11.6 6" fill="none" stroke="#222" stroke-width="1.7" stroke-linecap="round" stroke-linejoin="round"/></svg>
<svg style="left:687.9px;top:61.9px;" width="14.2" height="14.2" viewBox="0 0 16 16"><path d="M1.6 2.2 H4.6 C4.8 1.2 7.6 1.2 7.8 2.2 H10.8 V5 H6 V12.8 H1.6 Z" fill="#737373"/><path d="M7.2 6.2 H11.6 L14.4 9 V15 H7.2 Z" fill="#737373"/></svg>
<div style="left:715px;top:57px;width:28px;height:27px;background:#f5f6f9;border:1px solid #d9dce3;border-radius:3.5px;"></div>
<svg style="left:722.1px;top:61.9px;" width="14.2" height="14.2" viewBox="0 0 16 16"><path d="M1.6 3 H5.4 L6 1.8 H10 L10.6 3 H14.4 V4.6 H1.6 Z" fill="#737373"/><path d="M2.6 5.6 H13.4 L12.8 14 C12.8 14.6 12.4 15 11.8 15 H4.2 C3.6 15 3.2 14.6 3.2 14 Z M5.4 7.2 V13.2 H6.4 V7.2 Z M7.5 7.2 V13.2 H8.5 V7.2 Z M9.6 7.2 V13.2 H10.6 V7.2 Z" fill="#737373" fill-rule="evenodd"/></svg>
<div style="left:749px;top:57px;width:41px;height:27px;background:#fff;border:1px solid #cdd1d9;border-radius:3.5px;"></div>
<svg style="left:757.1px;top:61.5px;" width="15" height="15" viewBox="0 0 16 16"><path d="M2.6 3.4 H8.6 L6.8 5.2 H3.4 V12.6 H10.8 V9.4 L12.6 7.6 V13.2 C12.6 13.9 12.1 14.4 11.4 14.4 H2.6 C1.9 14.4 1.4 13.9 1.4 13.2 V4.6 C1.4 3.9 1.9 3.4 2.6 3.4 Z" fill="#222"/><path d="M12 1.4 L14.6 4 L8.4 10.2 L5.4 10.8 L6 7.6 Z M13 0.6 C13.6 0 14.4 0 15 0.6 C15.6 1.2 15.6 2 15 2.6 L14.9 2.7 L12.9 0.7 Z" fill="#222"/></svg>
<svg style="left:772.35px;top:62.15px;" width="12.5" height="12.5" viewBox="0 0 16 16"><path d="M4.4 6 L8 9.6 L11.6 6" fill="none" stroke="#222" stroke-width="1.7" stroke-linecap="round" stroke-linejoin="round"/></svg>
<div style="left:797px;top:57px;width:61px;height:27px;background:#f5f6f9;border:1px solid #d9dce3;border-radius:3.5px;"></div>
<div style="left:832px;top:57px;width:1px;height:27px;background:#d9dce3;"></div>
<svg style="left:808.5px;top:61.5px;" width="14.2" height="14.2" viewBox="0 0 16 16"><path d="M1 1.6 H15 C15.6 1.6 15.8 2.2 15.4 2.6 L10 8.4 V14.4 L6 11.8 V8.4 L0.6 2.6 C0.2 2.2 0.4 1.6 1 1.6 Z" fill="#4d4d4d"/></svg>
<svg style="left:838.95px;top:62.15px;" width="12.5" height="12.5" viewBox="0 0 16 16"><path d="M4.4 6 L8 9.6 L11.6 6" fill="none" stroke="#666" stroke-width="1.7" stroke-linecap="round" stroke-linejoin="round"/></svg>
<div style="left:865px;top:57px;width:88px;height:27px;background:#f3f5f8;border:1px solid #d9dce3;border-radius:3.5px;"></div>
<span class="t" id="t56" style="top:64.500px;font-size:11.4px;line-height:11.4px;color:#6c757d;letter-spacing:-0.036px;left:876.30px;">No limit</span>
<svg style="left:937.5px;top:66.5px;" width="11" height="9" viewBox="0 0 11 9"><path d="M1.4 2 L5.5 6.4 L9.6 2" fill="none" stroke="#555d6b" stroke-width="2" stroke-linecap="round" stroke-linejoin="round"/></svg>
<div style="left:960px;top:57px;width:75px;height:27px;background:#f5f6f9;border:1px solid #d9dce3;border-radius:3.5px;"></div>
<div style="left:986px;top:57px;width:1px;height:27px;background:#d9dce3;"></div>
<svg style="left:966.9px;top:62.4px;" width="13.2" height="13.2" viewBox="0 0 16 16"><rect x="2" y="2" width="12" height="12" rx="1.2" fill="#6f6f6f"/></svg>
<div style="left:986px;top:57px;width:49px;height:27px;background:#fff;border:1px solid #cdd1d9;border-radius:0 3.5px 3.5px 0;"></div>
<div style="left:1014px;top:57px;width:1px;height:27px;background:#cdd1d9;"></div>
<svg style="left:993.7px;top:61.7px;" width="14.6" height="14.6" viewBox="0 0 16 16"><path d="M3 1.4 L14.6 8 L3 14.6 Z" fill="#111" stroke="#111" stroke-width="1" stroke-linejoin="round"/></svg>
<svg style="left:1018.35px;top:62.15px;" width="12.5" height="12.5" viewBox="0 0 16 16"><path d="M4.4 6 L8 9.6 L11.6 6" fill="none" stroke="#222" stroke-width="1.7" stroke-linecap="round" stroke-linejoin="round"/></svg>
<div style="left:1041px;top:57px;width:75px;height:27px;background:#fff;border:1px solid #cdd1d9;border-radius:3.5px;"></div>
<div style="left:1068px;top:57px;width:1px;height:27px;background:#cdd1d9;"></div>
<div style="left:1096px;top:57px;width:1px;height:27px;background:#cdd1d9;"></div>
<svg style="left:1047.7px;top:61.3px;" width="15.4" height="15.4" viewBox="0 0 16 16"><path d="M5.2 1.2 C5.2 0.2 7 0.2 7 1.2 V6.6 H7.4 V5.8 C7.4 4.8 9 4.8 9 5.8 V6.8 H9.4 V6.4 C9.4 5.4 11 5.4 11 6.4 V7.2 H11.4 C11.4 6.2 13 6.2 13 7.2 V10.6 C13 12.2 12.4 13 12.2 14 V15 H6 V14 C5 13 3.6 11.2 2.8 9.8 C2.2 8.8 3.4 8 4.2 8.8 L5.2 10 Z" fill="#222"/></svg>
<svg style="left:1075.1px;top:61.5px;" width="15" height="15" viewBox="0 0 16 16"><rect x="1" y="2.2" width="14" height="11.6" rx="1.2" fill="none" stroke="#222" stroke-width="1.8"/><path d="M3.2 5.4 H4.8 M6.2 5.4 H12.8 M3.2 8 H4.8 M6.2 8 H12.8 M3.2 10.6 H4.8 M6.2 10.6 H12.8" stroke="#222" stroke-width="1.5"/></svg>
<svg style="left:1099.95px;top:62.15px;" width="12.5" height="12.5" viewBox="0 0 16 16"><path d="M4.4 6 L8 9.6 L11.6 6" fill="none" stroke="#222" stroke-width="1.7" stroke-linecap="round" stroke-linejoin="round"/></svg>
<div style="left:1123px;top:57px;width:57px;height:27px;background:#f5f6f9;border:1px solid #d9dce3;border-radius:3.5px;"></div>
<div style="left:1151px;top:57px;width:1px;height:27px;background:#d9dce3;"></div>
<svg style="left:1130.6px;top:62.4px;" width="14" height="14" viewBox="0 0 16 16"><ellipse cx="6.4" cy="3" rx="5" ry="2" fill="#6a6a6a"/><path d="M1.4 4.6 C1.4 6.6 11.4 6.6 11.4 4.6 V6.6 C11.4 8.6 1.4 8.6 1.4 6.6 Z" fill="#6a6a6a"/><path d="M1.4 8.2 C1.4 10 6 10.2 7 10 V12.2 C5 12.4 1.4 12 1.4 10.2 Z" fill="#6a6a6a"/><circle cx="11.4" cy="11.2" r="3.6" fill="#6a6a6a" stroke="#ebeef3" stroke-width="0.8"/><path d="M9.6 11.2 L11 12.6 L13.4 10" stroke="#ebeef3" stroke-width="1.1" fill="none"/></svg>
<svg style="left:1158.6px;top:62.4px;" width="14" height="14" viewBox="0 0 16 16"><ellipse cx="6.4" cy="3" rx="5" ry="2" fill="#6a6a6a"/><path d="M1.4 4.6 C1.4 6.6 11.4 6.6 11.4 4.6 V6.6 C11.4 8.6 1.4 8.6 1.4 6.6 Z" fill="#6a6a6a"/><path d="M1.4 8.2 C1.4 10 6 10.2 7 10 V12.2 C5 12.4 1.4 12 1.4 10.2 Z" fill="#6a6a6a"/><circle cx="11.4" cy="11.2" r="3.6" fill="#6a6a6a" stroke="#ebeef3" stroke-width="0.8"/><path d="M13.2 11.4 A1.9 1.9 0 1 1 11.4 9.4 M11.4 8.2 L10 9.4 L11.4 10.6" stroke="#ebeef3" stroke-width="0.9" fill="none"/></svg>
<div style="left:1187px;top:57px;width:39px;height:27px;background:#fff;border:1px solid #cdd1d9;border-radius:3.5px;"></div>
<svg style="left:1194.3px;top:61.7px;" width="14.6" height="14.6" viewBox="0 0 16 16"><path d="M9.2 1.6 L15 7.4 L9.6 12.8 H14.6 V14.4 H4.4 L1 11 C0.4 10.4 0.4 9.6 1 9 Z M3.2 10 L5.6 12.6 H7.4 L9.4 10.6 L6 7.2 Z" fill="#222" fill-rule="evenodd"/></svg>
<svg style="left:1208.55px;top:62.15px;" width="12.5" height="12.5" viewBox="0 0 16 16"><path d="M4.4 6 L8 9.6 L11.6 6" fill="none" stroke="#222" stroke-width="1.7" stroke-linecap="round" stroke-linejoin="round"/></svg>
<div style="left:1233px;top:57px;width:29px;height:27px;background:#fff;border:1px solid #cdd1d9;border-radius:3.5px;"></div>
<svg style="left:1240.4px;top:62.4px;" width="14" height="14" viewBox="0 0 16 16"><path d="M6.4 0.8 H9.6 V6 H12.6 L8 10.8 L3.4 6 H6.4 Z" fill="#222"/><path d="M0.8 10.6 H4.6 L6.6 12.6 H9.4 L11.4 10.6 H15.2 V15 H0.8 Z M12.4 13.4 A0.6 0.6 0 1 0 12.4 12.2 A0.6 0.6 0 1 0 12.4 13.4 Z" fill="#222" fill-rule="evenodd"/></svg>
<div style="left:1265px;top:57px;width:42px;height:27px;background:#fff;border:1px solid #cdd1d9;border-radius:3.5px;"></div>
<svg style="left:1273.0px;top:61.6px;" width="15.6" height="15.6" viewBox="0 0 16 16"><path d="M0.4 3.4 C0.4 1.6 3.6 1.6 3.6 3.4 V5 H0.4 Z" fill="#222"/><path d="M3 1.8 H13.2 V11 H15.8 V12.4 C15.8 13.6 15 14.4 13.8 14.4 H6.4 C5.2 14.4 4.6 13.6 4.6 12.6 V3.4 C4.6 2.6 3.8 1.8 3 1.8 Z" fill="#222"/><path d="M6.2 11.4 H12.6" stroke="#fff" stroke-width="0.9"/></svg>
<svg style="left:1289.55px;top:62.15px;" width="12.5" height="12.5" viewBox="0 0 16 16"><path d="M4.4 6 L8 9.6 L11.6 6" fill="none" stroke="#222" stroke-width="1.7" stroke-linecap="round" stroke-linejoin="round"/></svg>
<div style="left:421px;top:87px;width:1490px;height:23px;background:#5b6d7c;"></div>
<div style="left:455px;top:87px;width:1px;height:23px;background:#414f5b;"></div>
<svg style="left:430.0px;top:91.0px;" width="16" height="16" viewBox="0 0 16 16"><g fill="none" stroke="#fff" stroke-linecap="round"><rect x="-3.6" y="-2.5" width="7.2" height="5" rx="2.5" transform="translate(5.7 7.2) rotate(28)" stroke-width="1.9"/><rect x="-3.6" y="-2.5" width="7.2" height="5" rx="2.5" transform="translate(10.3 9.4) rotate(28)" stroke-width="1.9"/><path d="M14.4 1.6 L1.6 14.6" stroke-width="1.6"/></g></svg>
<span class="t" id="t57" style="top:92.000px;font-size:12.4px;line-height:12.4px;color:#fff;letter-spacing:0.173px;left:459.00px;text-shadow:0 0 0.4px #fff;">elwas/elwas@elwas</span>
<svg style="left:578.2px;top:93.6px;" width="9" height="8" viewBox="0 0 9 8"><path d="M1 2 L4.5 5.6 L8 2" fill="none" stroke="#fff" stroke-width="1.6" stroke-linecap="round" stroke-linejoin="round"/></svg>
<div style="left:421px;top:110px;width:1490px;height:27px;background:#fff;"></div>
<div style="left:421px;top:137px;width:1490px;height:1px;background:#dde0e6;"></div>
<span class="t" id="t58" style="top:117.100px;font-size:12.2px;line-height:12.2px;color:#3a6a9e;letter-spacing:-0.052px;left:430.40px;">Query Editor</span>
<div style="left:421px;top:135px;width:85.7px;height:2px;background:#326690;"></div>
<span class="t" id="t59" style="top:117.100px;font-size:12.2px;line-height:12.2px;color:#222;letter-spacing:0.092px;left:516.80px;">Query History</span>
<div style="left:1545px;top:110px;width:1px;height:382px;background:#dde0e6;"></div>
<span class="t" id="t60" style="top:117.100px;font-size:12.2px;line-height:12.2px;color:#222;letter-spacing:0.083px;left:1555.40px;">Scratch Pad</span>
<svg style="left:1897.7px;top:117.3px;" width="10" height="10" viewBox="0 0 10 10"><path d="M1.2 1.2 L8.8 8.8 M8.8 1.2 L1.2 8.8" stroke="#111" stroke-width="2.1" stroke-linecap="butt"/></svg>
<div style="left:421px;top:138px;width:37px;height:354px;background:#ebeef3;"></div>
<span class="t" id="t61" style="top:146.900px;font-size:12.6px;line-height:12.6px;color:#222;font-family:'Liberation Mono', monospace;left:437.60px;">1</span>
<span class="t" id="t62" style="top:146.900px;font-size:12.6px;line-height:12.6px;color:#a1249a;font-weight:700;font-family:'Liberation Mono', monospace;letter-spacing:0.007px;left:461.30px;">select</span>
<span class="t" id="t63" style="top:146.900px;font-size:12.6px;line-height:12.6px;color:#222;font-family:'Liberation Mono', monospace;letter-spacing:0.005px;left:506.70px;"> * </span>
<span class="t" id="t64" style="top:146.900px;font-size:12.6px;line-height:12.6px;color:#a1249a;font-weight:700;font-family:'Liberation Mono', monospace;letter-spacing:0.008px;left:529.40px;">from</span>
<span class="t" id="t65" style="top:146.900px;font-size:12.6px;line-height:12.6px;color:#222;font-family:'Liberation Mono', monospace;letter-spacing:0.007px;left:559.67px;"> sina.</span>
<span class="t" id="t66" style="top:146.900px;font-size:12.6px;line-height:12.6px;color:#1f62a8;font-family:'Liberation Mono', monospace;letter-spacing:0.007px;left:605.07px;">nitrat</span>
<span class="t" id="t67" style="top:146.900px;font-size:12.6px;line-height:12.6px;color:#222;font-family:'Liberation Mono', monospace;letter-spacing:0.005px;left:650.48px;"> </span>
<span class="t" id="t68" style="top:146.900px;font-size:12.6px;line-height:12.6px;color:#a1249a;font-weight:700;font-family:'Liberation Mono', monospace;letter-spacing:0.008px;left:658.04px;">where</span>
<span class="t" id="t69" style="top:146.900px;font-size:12.6px;line-height:12.6px;color:#222;font-family:'Liberation Mono', monospace;letter-spacing:0.008px;left:695.88px;"> datum_pn = </span>
<span class="t" id="t70" style="top:146.900px;font-size:12.6px;line-height:12.6px;color:#8f8f8f;font-family:'Liberation Mono', monospace;letter-spacing:0.005px;left:786.68px;">(</span>
<span class="t" id="t71" style="top:146.900px;font-size:12.6px;line-height:12.6px;color:#a1249a;font-weight:700;font-family:'Liberation Mono', monospace;letter-spacing:0.007px;left:794.25px;">select</span>
<span class="t" id="t72" style="top:146.900px;font-size:12.6px;line-height:12.6px;color:#222;font-family:'Liberation Mono', monospace;letter-spacing:0.005px;left:839.65px;"> </span>
<span class="t" id="t73" style="top:146.900px;font-size:12.6px;line-height:12.6px;color:#a1249a;font-weight:700;font-family:'Liberation Mono', monospace;letter-spacing:0.005px;left:847.22px;">max</span>
<span class="t" id="t74" style="top:146.900px;font-size:12.6px;line-height:12.6px;color:#8f8f8f;font-family:'Liberation Mono', monospace;letter-spacing:0.005px;left:869.92px;">(</span>
<span class="t" id="t75" style="top:146.900px;font-size:12.6px;line-height:12.6px;color:#222;font-family:'Liberation Mono', monospace;letter-spacing:0.008px;left:877.49px;">datum_pn</span>
<span class="t" id="t76" style="top:146.900px;font-size:12.6px;line-height:12.6px;color:#8f8f8f;font-family:'Liberation Mono', monospace;letter-spacing:0.005px;left:938.02px;">)</span>
<span class="t" id="t77" style="top:146.900px;font-size:12.6px;line-height:12.6px;color:#222;font-family:'Liberation Mono', monospace;letter-spacing:0.005px;left:945.59px;"> </span>
<span class="t" id="t78" style="top:146.900px;font-size:12.6px;line-height:12.6px;color:#a1249a;font-weight:700;font-family:'Liberation Mono', monospace;letter-spacing:0.008px;left:953.16px;">from</span>
<span class="t" id="t79" style="top:146.900px;font-size:12.6px;line-height:12.6px;color:#222;font-family:'Liberation Mono', monospace;letter-spacing:0.007px;left:983.42px;"> sina.</span>
<span class="t" id="t80" style="top:146.900px;font-size:12.6px;line-height:12.6px;color:#1f62a8;font-family:'Liberation Mono', monospace;letter-spacing:0.007px;left:1028.83px;">nitrat</span>
<span class="t" id="t81" style="top:146.900px;font-size:12.6px;line-height:12.6px;color:#8f8f8f;font-family:'Liberation Mono', monospace;letter-spacing:0.005px;left:1074.23px;">)</span>
<div style="left:421px;top:492px;width:1490px;height:1px;background:#dde0e6;"></div>
<div style="left:421px;top:493px;width:1490px;height:28px;background:#fff;"></div>
<span class="t" id="t82" style="top:500.100px;font-size:12.2px;line-height:12.2px;color:#3a6a9e;letter-spacing:0.126px;left:430.40px;">Data Output</span>
<span class="t" id="t83" style="top:500.100px;font-size:12.2px;line-height:12.2px;color:#222;letter-spacing:0.059px;left:515.20px;">Explain</span>
<span class="t" id="t84" style="top:500.100px;font-size:12.2px;line-height:12.2px;color:#222;letter-spacing:0.257px;left:573.80px;">Messages</span>
<span class="t" id="t85" style="top:500.100px;font-size:12.2px;line-height:12.2px;color:#222;letter-spacing:0.385px;left:649.60px;">Notifications</span>
<div style="left:421px;top:519px;width:84.7px;height:2px;background:#326690;"></div>
<div style="left:421px;top:521px;width:1490px;height:1px;background:#dde0e6;"></div>
<div style="left:421px;top:522px;width:1490px;height:341px;background:#ebeef3;"></div>
<div style="left:421px;top:522px;width:1490px;height:57px;background:#fff;"></div>
<div style="left:421px;top:557px;width:1490px;height:1px;background:#dde0e6;"></div>
<div style="left:421px;top:579px;width:1490px;height:1px;background:#dde0e6;"></div>
<span class="t" id="t86" style="top:562.800px;font-size:10.8px;line-height:10.8px;color:#222;left:432.00px;">1</span>
<svg style="left:435px;top:543.5px;" width="9" height="9" viewBox="0 0 9 9"><path d="M8.8 0.2 V8.8 H0.2 Z" fill="#5a5a5a"/></svg>
<div style="left:421px;top:522px;width:1490px;height:57px;overflow:hidden;">
<div style="left:27px;top:0px;width:1px;height:57px;background:#dde0e6;"></div>
<span class="t" id="t87" style="top:4.700px;font-size:10.0px;line-height:10.0px;color:#222;font-weight:700;left:33.50px;">sl_nr</span>
<span class="t" id="t88" style="top:18.750px;font-size:10.9px;line-height:10.9px;color:#222;left:33.50px;">bigint</span>
<svg style="left:73.8px;top:10.8px;" width="10" height="12" viewBox="0 0 10 12"><path d="M2.5 5.6 V3.9 A2.5 2.5 0 0 1 7.5 3.9 V5.6" fill="none" stroke="#222" stroke-width="1.6"/><rect x="0.3" y="5.3" width="9.4" height="6.4" rx="1.1" fill="#222"/></svg>
<span class="t" id="t89" style="top:40.800px;font-size:10.8px;line-height:10.8px;color:#222;right:1405.40px;">17721010</span>
<div style="left:89px;top:0px;width:1px;height:57px;background:#dde0e6;"></div>
<span class="t" id="t90" style="top:4.700px;font-size:10.0px;line-height:10.0px;color:#222;font-weight:700;left:95.50px;">messstelle_id</span>
<span class="t" id="t91" style="top:18.750px;font-size:10.9px;line-height:10.9px;color:#222;left:95.50px;">bigint</span>
<svg style="left:182.8px;top:10.8px;" width="10" height="12" viewBox="0 0 10 12"><path d="M2.5 5.6 V3.9 A2.5 2.5 0 0 1 7.5 3.9 V5.6" fill="none" stroke="#222" stroke-width="1.6"/><rect x="0.3" y="5.3" width="9.4" height="6.4" rx="1.1" fill="#222"/></svg>
<span class="t" id="t92" style="top:40.800px;font-size:10.8px;line-height:10.8px;color:#222;right:1296.40px;">94190173</span>
<div style="left:198px;top:0px;width:1px;height:57px;background:#dde0e6;"></div>
<span class="t" id="t93" style="top:4.700px;font-size:10.0px;line-height:10.0px;color:#222;font-weight:700;left:204.50px;">pna_id</span>
<span class="t" id="t94" style="top:18.750px;font-size:10.9px;line-height:10.9px;color:#222;left:204.50px;">text</span>
<svg style="left:250.8px;top:10.8px;" width="10" height="12" viewBox="0 0 10 12"><path d="M2.5 5.6 V3.9 A2.5 2.5 0 0 1 7.5 3.9 V5.6" fill="none" stroke="#222" stroke-width="1.6"/><rect x="0.3" y="5.3" width="9.4" height="6.4" rx="1.1" fill="#222"/></svg>
<span class="t" id="t95" style="top:40.800px;font-size:10.8px;line-height:10.8px;color:#222;left:204.00px;">5/2021/13</span>
<div style="left:266px;top:0px;width:1px;height:57px;background:#dde0e6;"></div>
<span class="t" id="t96" style="top:4.700px;font-size:10.0px;line-height:10.0px;color:#222;font-weight:700;left:272.50px;">datum_pn</span>
<span class="t" id="t97" style="top:18.750px;font-size:10.9px;line-height:10.9px;color:#222;left:272.50px;">date</span>
<svg style="left:338.8px;top:10.8px;" width="10" height="12" viewBox="0 0 10 12"><path d="M2.5 5.6 V3.9 A2.5 2.5 0 0 1 7.5 3.9 V5.6" fill="none" stroke="#222" stroke-width="1.6"/><rect x="0.3" y="5.3" width="9.4" height="6.4" rx="1.1" fill="#222"/></svg>
<span class="t" id="t98" style="top:40.800px;font-size:10.8px;line-height:10.8px;color:#222;left:272.00px;">2021-08-17</span>
<div style="left:354px;top:0px;width:1px;height:57px;background:#dde0e6;"></div>
<span class="t" id="t99" style="top:4.700px;font-size:10.0px;line-height:10.0px;color:#222;font-weight:700;left:360.50px;">stoff_nr</span>
<span class="t" id="t100" style="top:18.750px;font-size:10.9px;line-height:10.9px;color:#222;left:360.50px;">bigint</span>
<svg style="left:412.8px;top:10.8px;" width="10" height="12" viewBox="0 0 10 12"><path d="M2.5 5.6 V3.9 A2.5 2.5 0 0 1 7.5 3.9 V5.6" fill="none" stroke="#222" stroke-width="1.6"/><rect x="0.3" y="5.3" width="9.4" height="6.4" rx="1.1" fill="#222"/></svg>
<span class="t" id="t101" style="top:40.800px;font-size:10.8px;line-height:10.8px;color:#222;right:1066.40px;">1244</span>
<div style="left:428px;top:0px;width:1px;height:57px;background:#dde0e6;"></div>
<span class="t" id="t102" style="top:4.700px;font-size:10.0px;line-height:10.0px;color:#222;font-weight:700;left:434.50px;">probengut</span>
<span class="t" id="t103" style="top:18.750px;font-size:10.9px;line-height:10.9px;color:#222;left:434.50px;">text</span>
<svg style="left:500.8px;top:10.8px;" width="10" height="12" viewBox="0 0 10 12"><path d="M2.5 5.6 V3.9 A2.5 2.5 0 0 1 7.5 3.9 V5.6" fill="none" stroke="#222" stroke-width="1.6"/><rect x="0.3" y="5.3" width="9.4" height="6.4" rx="1.1" fill="#222"/></svg>
<span class="t" id="t104" style="top:40.800px;font-size:10.8px;line-height:10.8px;color:#222;left:434.00px;">Grundwasser</span>
<div style="left:516px;top:0px;width:1px;height:57px;background:#dde0e6;"></div>
<span class="t" id="t105" style="top:4.700px;font-size:10.0px;line-height:10.0px;color:#222;font-weight:700;left:522.50px;">messergebnis_c</span>
<span class="t" id="t106" style="top:18.750px;font-size:10.9px;line-height:10.9px;color:#222;left:522.50px;">double precision</span>
<svg style="left:624.8px;top:10.8px;" width="10" height="12" viewBox="0 0 10 12"><path d="M2.5 5.6 V3.9 A2.5 2.5 0 0 1 7.5 3.9 V5.6" fill="none" stroke="#222" stroke-width="1.6"/><rect x="0.3" y="5.3" width="9.4" height="6.4" rx="1.1" fill="#222"/></svg>
<span class="t" id="t107" style="top:40.800px;font-size:10.8px;line-height:10.8px;color:#222;right:854.40px;">41</span>
<div style="left:640px;top:0px;width:1px;height:57px;background:#dde0e6;"></div>
<span class="t" id="t108" style="top:4.700px;font-size:10.0px;line-height:10.0px;color:#222;font-weight:700;left:646.50px;">messergebnis_hinweis</span>
<span class="t" id="t109" style="top:18.750px;font-size:10.9px;line-height:10.9px;color:#222;left:646.50px;">text</span>
<svg style="left:782.8px;top:10.8px;" width="10" height="12" viewBox="0 0 10 12"><path d="M2.5 5.6 V3.9 A2.5 2.5 0 0 1 7.5 3.9 V5.6" fill="none" stroke="#222" stroke-width="1.6"/><rect x="0.3" y="5.3" width="9.4" height="6.4" rx="1.1" fill="#222"/></svg>
<span class="t" id="t110" style="top:40.800px;font-size:10.8px;line-height:10.8px;color:#777;left:646.00px;">[null]</span>
<div style="left:798px;top:0px;width:1px;height:57px;background:#dde0e6;"></div>
<span class="t" id="t111" style="top:4.700px;font-size:10.0px;line-height:10.0px;color:#222;font-weight:700;left:804.50px;">bestimmungsgrenze</span>
<span class="t" id="t112" style="top:18.750px;font-size:10.9px;line-height:10.9px;color:#222;left:804.50px;">double precision</span>
<svg style="left:929.8px;top:10.8px;" width="10" height="12" viewBox="0 0 10 12"><path d="M2.5 5.6 V3.9 A2.5 2.5 0 0 1 7.5 3.9 V5.6" fill="none" stroke="#222" stroke-width="1.6"/><rect x="0.3" y="5.3" width="9.4" height="6.4" rx="1.1" fill="#222"/></svg>
<span class="t" id="t113" style="top:40.800px;font-size:10.8px;line-height:10.8px;color:#777;right:549.40px;">[null]</span>
<div style="left:945px;top:0px;width:1px;height:57px;background:#dde0e6;"></div>
<span class="t" id="t114" style="top:4.700px;font-size:10.0px;line-height:10.0px;color:#222;font-weight:700;left:951.50px;">masseinheit</span>
<span class="t" id="t115" style="top:18.750px;font-size:10.9px;line-height:10.9px;color:#222;left:951.50px;">text</span>
<svg style="left:1029.8px;top:10.8px;" width="10" height="12" viewBox="0 0 10 12"><path d="M2.5 5.6 V3.9 A2.5 2.5 0 0 1 7.5 3.9 V5.6" fill="none" stroke="#222" stroke-width="1.6"/><rect x="0.3" y="5.3" width="9.4" height="6.4" rx="1.1" fill="#222"/></svg>
<span class="t" id="t116" style="top:40.800px;font-size:10.8px;line-height:10.8px;color:#222;left:951.00px;">mg/l</span>
<div style="left:1045px;top:0px;width:1px;height:57px;background:#dde0e6;"></div>
<span class="t" id="t117" style="top:4.700px;font-size:10.0px;line-height:10.0px;color:#222;font-weight:700;left:1051.50px;">trennverfahren</span>
<span class="t" id="t118" style="top:18.750px;font-size:10.9px;line-height:10.9px;color:#222;left:1051.50px;">text</span>
<svg style="left:1142.8px;top:10.8px;" width="10" height="12" viewBox="0 0 10 12"><path d="M2.5 5.6 V3.9 A2.5 2.5 0 0 1 7.5 3.9 V5.6" fill="none" stroke="#222" stroke-width="1.6"/><rect x="0.3" y="5.3" width="9.4" height="6.4" rx="1.1" fill="#222"/></svg>
<span class="t" id="t119" style="top:40.800px;font-size:10.8px;line-height:10.8px;color:#222;left:1051.00px;">Gesamtgehalt</span>
<div style="left:1158px;top:0px;width:1px;height:57px;background:#dde0e6;"></div>
<span class="t" id="t120" style="top:4.700px;font-size:10.0px;line-height:10.0px;color:#222;font-weight:700;left:1164.50px;">verfahren</span>
<span class="t" id="t121" style="top:18.750px;font-size:10.9px;line-height:10.9px;color:#222;left:1164.50px;">text</span>
<svg style="left:1227.8px;top:10.8px;" width="10" height="12" viewBox="0 0 10 12"><path d="M2.5 5.6 V3.9 A2.5 2.5 0 0 1 7.5 3.9 V5.6" fill="none" stroke="#222" stroke-width="1.6"/><rect x="0.3" y="5.3" width="9.4" height="6.4" rx="1.1" fill="#222"/></svg>
<span class="t" id="t122" style="top:40.800px;font-size:10.8px;line-height:10.8px;color:#222;left:1164.00px;">Keine Angabe</span>
<div style="left:1243px;top:0px;width:1px;height:57px;background:#dde0e6;"></div>
<span class="t" id="t123" style="top:4.700px;font-size:10.0px;line-height:10.0px;color:#222;font-weight:700;left:1249.50px;">vor_ort</span>
<span class="t" id="t124" style="top:18.750px;font-size:10.9px;line-height:10.9px;color:#222;left:1249.50px;">text</span>
<svg style="left:1297.8px;top:10.8px;" width="10" height="12" viewBox="0 0 10 12"><path d="M2.5 5.6 V3.9 A2.5 2.5 0 0 1 7.5 3.9 V5.6" fill="none" stroke="#222" stroke-width="1.6"/><rect x="0.3" y="5.3" width="9.4" height="6.4" rx="1.1" fill="#222"/></svg>
<span class="t" id="t125" style="top:40.800px;font-size:10.8px;line-height:10.8px;color:#222;left:1249.00px;"></span>
<div style="left:1313px;top:0px;width:1px;height:57px;background:#dde0e6;"></div>
<span class="t" id="t126" style="top:4.700px;font-size:10.0px;line-height:10.0px;color:#222;font-weight:700;left:1319.50px;">herkunft</span>
<span class="t" id="t127" style="top:18.750px;font-size:10.9px;line-height:10.9px;color:#222;left:1319.50px;">text</span>
<svg style="left:1375.8px;top:10.8px;" width="10" height="12" viewBox="0 0 10 12"><path d="M2.5 5.6 V3.9 A2.5 2.5 0 0 1 7.5 3.9 V5.6" fill="none" stroke="#222" stroke-width="1.6"/><rect x="0.3" y="5.3" width="9.4" height="6.4" rx="1.1" fill="#222"/></svg>
<span class="t" id="t128" style="top:40.800px;font-size:10.8px;line-height:10.8px;color:#222;letter-spacing:-0.656px;left:1319.00px;">HYGRISC_5</span>
<div style="left:1391px;top:0px;width:1px;height:57px;background:#dde0e6;"></div>
<span class="t" id="t129" style="top:4.700px;font-size:10.0px;line-height:10.0px;color:#222;font-weight:700;left:1397.50px;">aktual_dat</span>
<span class="t" id="t130" style="top:18.750px;font-size:10.9px;line-height:10.9px;color:#222;left:1397.50px;">date</span>
<svg style="left:1464.8px;top:10.8px;" width="10" height="12" viewBox="0 0 10 12"><path d="M2.5 5.6 V3.9 A2.5 2.5 0 0 1 7.5 3.9 V5.6" fill="none" stroke="#222" stroke-width="1.6"/><rect x="0.3" y="5.3" width="9.4" height="6.4" rx="1.1" fill="#222"/></svg>
<span class="t" id="t131" style="top:40.800px;font-size:10.8px;line-height:10.8px;color:#222;left:1397.00px;">2021-09-28</span>
<div style="left:1480px;top:0px;width:1px;height:57px;background:#dde0e6;"></div>
<span class="t" id="t132" style="top:4.700px;font-size:10.0px;line-height:10.0px;color:#222;font-weight:700;left:1486.50px;">e</span>
<span class="t" id="t133" style="top:18.750px;font-size:10.9px;line-height:10.9px;color:#222;left:1486.50px;">d</span>
<span class="t" id="t134" style="top:40.800px;font-size:10.8px;line-height:10.8px;color:#222;left:1486.00px;">2</span>
</div>
<svg style="left:0px;top:0px;pointer-events:none;" width="1911" height="863" viewBox="0 0 1911 863"><rect x="690.5" y="557.4" width="84.9" height="22.7" fill="none" stroke="#e21f26" stroke-width="4.7"/></svg>
<div style="left:421px;top:853px;width:1490px;height:10px;background:#e2e5ec;"></div>
<div style="left:424px;top:856px;width:1307px;height:10px;background:#c6c9d4;border-radius:4px;"></div>
</body></html>
